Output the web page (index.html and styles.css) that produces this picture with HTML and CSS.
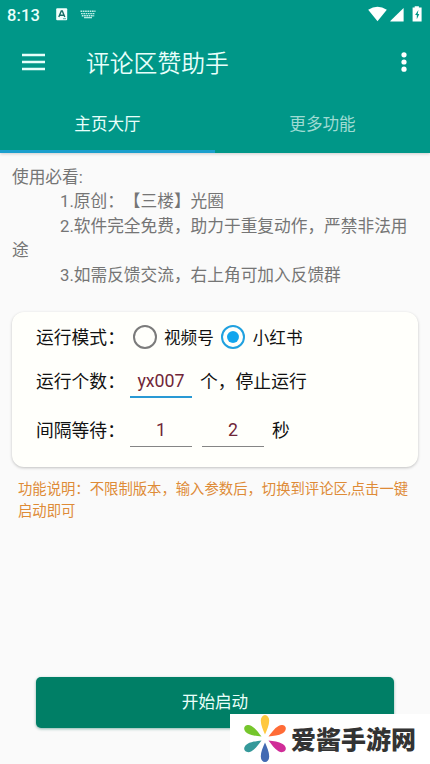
FILE: index.html
```html
<!DOCTYPE html>
<html lang="zh-CN">
<head>
<meta charset="utf-8">
<title>评论区赞助手</title>
<link rel="stylesheet" href="styles.css">
</head>
<body>
<div class="screen">
  <header class="header">
    <div class="status">
      <span class="clock">8:13</span>
      <svg class="ime" width="12" height="13" viewBox="0 0 12 13"><rect x="0.2" y="0.3" width="11" height="12" rx="1" fill="#f1fffc"/><path d="M2.8 9 5.3 3h1L8.8 9M3.8 7.2h4" fill="none" stroke="#176f66" stroke-width="1.4"/><path d="M7 10.7h3" stroke="#009788" stroke-width=".7"/></svg>
      <svg class="keyboard" width="16" height="9" viewBox="0 0 16 9"><path d="M0.5 1.2h15M1 3.6h14M1.8 5.8h12.4" stroke="#bff0e8" stroke-width="1.4" stroke-dasharray="1.7 .6"/><path d="M4 7.7h8" stroke="#d5f7f1" stroke-width="1.1"/></svg>
      <svg class="signals" width="56" height="17" viewBox="0 0 56 17"><path d="M0.2 3.8Q9.5-2.3 18.8 3.8L9.5 15.2Z" fill="#fff"/><path d="M22.3 15.5V15L35.6 2v13.5Z" fill="#fff"/><path d="M46.7 1.6V.2h4.2v1.4h2.7V15.5h-9V1.6Z" fill="#fff"/><path d="m50.4 4-3.3 5h1.7v4.3l2.5-5.2h-1.6Z" fill="#009788"/></svg>
    </div>
    <div class="appbar">
      <svg class="menu" width="24" height="18" viewBox="0 0 24 18"><path d="M0 2h23M0 9h23M0 16h23" stroke="#e6fffb" stroke-width="2.3"/></svg>
      <h1 class="title">评论区赞助手</h1>
      <svg class="more" width="6" height="22" viewBox="0 0 6 22"><g fill="#fff"><circle cx="3" cy="3.8" r="2.6"/><circle cx="3" cy="11" r="2.6"/><circle cx="3" cy="18.2" r="2.6"/></g></svg>
    </div>
    <nav class="tabs"><div class="tab active">主页大厅</div><div class="tab">更多功能</div></nav>
  </header>
  <section class="notice">
    <p>使用必看:</p>
    <p class="item">1.原创：【三楼】光圈</p>
    <p class="item">2.软件完全免费，助力于重复动作，严禁非法用途</p>
    <p class="item">3.如需反馈交流，右上角可加入反馈群</p>
  </section>
  <section class="card">
    <div class="row mode"><span class="label">运行模式：</span><span class="radio"></span><span class="option first">视频号</span><span class="radio checked"></span><span class="option">小红书</span></div>
    <div class="row count"><span class="label">运行个数：</span><span class="field focused">yx007</span><span class="unit">个，停止运行</span></div>
    <div class="row wait"><span class="label">间隔等待：</span><span class="field">1</span><span class="field second">2</span><span class="unit">秒</span></div>
  </section>
  <p class="hint">功能说明：不限制版本，输入参数后，切换到评论区,点击一键启动即可</p>
  <div class="start">开始启动</div>
  <div class="brand">
    <svg class="flower" width="44" height="50" viewBox="0 0 44 50"><defs><path id="petal" d="M0-4C-2-9-4.2-13-4.2-18a4.2 5.5 0 0 1 8.4 0C4.2-13 2-9 0-4Z"/></defs><g transform="translate(22 24.6)"><use href="#petal" fill="#ffc83e"/><use href="#petal" fill="#ff6b36" transform="rotate(60)"/><use href="#petal" fill="#d02c98" transform="rotate(120)"/><use href="#petal" fill="#426ab3" transform="rotate(180)"/><use href="#petal" fill="#35999a" transform="rotate(240)"/><use href="#petal" fill="#75c62c" transform="rotate(300)"/></g></svg>
    <span class="brandname">爱酱手游网</span>
  </div>
</div>
</body>
</html>
```
FILE: styles.css
```css
* { box-sizing: border-box; }
body { margin: 0; font-family: Roboto, "Noto Sans CJK SC", sans-serif; text-spacing-trim: space-all; }
p, h1 { margin: 0; font-weight: 400; }
svg { display: block; flex: none; }
.screen { position: relative; width: 430px; height: 764px; overflow: hidden; background: #fafafa; display: flex; flex-direction: column; }
.header { height: 153px; flex: none; background: #009788; box-shadow: 0 1px 3px rgba(0,0,0,.18); }
.status { height: 30px; padding: 0 7px; display: flex; align-items: center; }
.clock { width: 49px; font-size: 16.5px; font-weight: 500; letter-spacing: .1px; color: #e9fffb; }
.ime { margin-top: -1px; }
.keyboard { margin-left: 12px; margin-top: -1px; }
.signals { margin-left: auto; margin-top: -2px; margin-right: -1px; }
.appbar { height: 65px; padding: 0 23px 0 22px; display: flex; align-items: center; }
.menu { margin-top: -2px; }
.title { margin: -2px 0 0 40px; font-family: "Noto Sans CJK SC", sans-serif; font-weight: 350; font-size: 23.8px; line-height: 36px; color: #e8fffb; }
.more { margin-left: auto; margin-top: -2px; }
.tabs { height: 58px; display: flex; }
.tab { flex: 1; text-align: center; font-size: 16.6px; line-height: 60px; color: #9edbd3; }
.active { color: #e8fffb; border-bottom: 3px solid #1b9fcd; }
.notice { margin: 13px 12px 0; height: 122px; font-size: 16.7px; font-weight: 400; line-height: 24.4px; color: #757575; }
.item { text-indent: 48px; }
.card { margin: 24px 12px 0; width: 406px; height: 155px; flex: none; padding: 5px 24px 0; border-radius: 12px; background: #fffffb; box-shadow: 0 1px 3px rgba(0,0,0,.23); color: #111; font-size: 17.8px; }
.row { display: flex; align-items: center; }
.label { width: 94px; white-space: nowrap; flex: none; }
.mode { height: 40px; }
.mode .label { margin-top: -2px; }
.count { height: 49px; }
.wait { height: 49px; }
.count .label, .count .unit { margin-top: -4px; }
.wait .label, .wait .unit { margin-top: -3px; }
.radio { width: 24px; height: 24px; margin-left: 2.5px; border: 2.3px solid #7b7b7b; border-radius: 50%; }
.checked { border-color: #20a1df; padding: 3.8px; background: #12a5ed content-box; margin-left: 7.5px; }
.option { margin-left: 7.5px; font-size: 16.6px; }
.field { width: 62px; height: 33px; text-align: center; line-height: 32px; color: #702638; border-bottom: 1.5px solid #858585; }
.wait .field { margin-top: -1px; }
.focused { line-height: 31px; border-bottom: 2.5px solid #2999d4; }
.second { margin-left: 10px; }
.unit { margin-left: 8px; }
.hint { margin: 12px 18px 0; font-size: 14.35px; line-height: 21.5px; color: #de8b37; width: 400px; }
.start { margin: auto 36px 36px; height: 51px; flex: none; border-radius: 5px; background: #007f66; box-shadow: 0 1px 3px rgba(0,100,80,.45); text-align: center; color: #eafffa; font-size: 16.6px; line-height: 52px; }
.brand { position: absolute; right: 0; bottom: 0; width: 200px; height: 50px; background: #fff; display: flex; align-items: center; padding-left: 13px; }
.brandname { margin: -2px 0 0 4px; font-family: "Noto Sans CJK SC", sans-serif; font-size: 25px; line-height: 50px; font-weight: 900; color: #333; white-space: nowrap; }
```
